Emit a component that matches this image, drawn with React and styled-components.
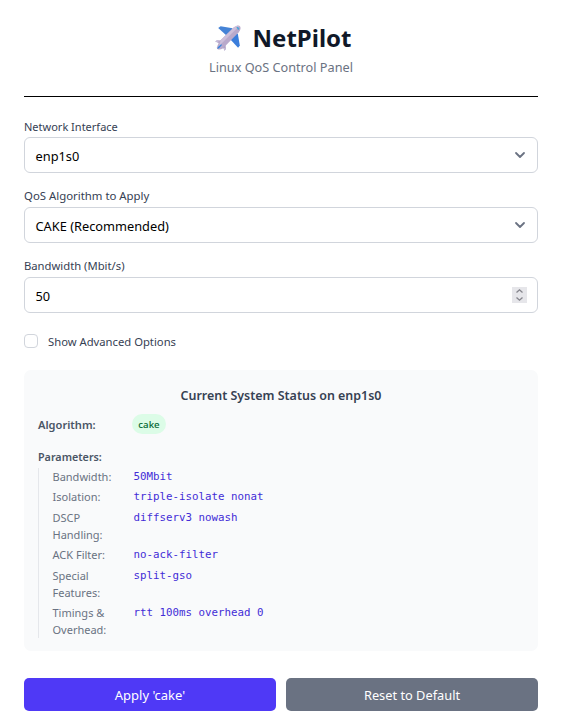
import React from 'react';
import styled, { createGlobalStyle } from 'styled-components';

const GlobalStyle = createGlobalStyle`
  *, *::before, *::after { box-sizing: border-box; }
  html, body { margin: 0; background: #fff; }
  body { font-family: "Noto Sans", "Open Sans", sans-serif; overflow: hidden; }
`;

const Page = styled.main`
  width: 563px;
  height: 721px;
  padding: 23px 25px 0 24px;
  background: #fff;
`;

const Header = styled.header`
  height: 74px;
  border-bottom: 1px solid #000;
  display: flex;
  flex-direction: column;
  align-items: center;
`;

const Title = styled.h1`
  margin: 0;
  height: 30px;
  padding-left: 2.5px;
  display: flex;
  align-items: center;
  gap: 11.5px;
  font-size: 24px;
  line-height: 30px;
  font-weight: 700;
  color: #101828;
  svg { display: block; }
`;

const Subtitle = styled.p`
  margin: 4px 0 0;
  font-size: 12.7px;
  line-height: 20px;
  color: #6a7282;
`;

const Form = styled.form`
  margin: 0;
  padding-top: 21px;
  display: flex;
  flex-direction: column;
`;

const Field = styled.div`
  height: 70px;
`;

const Label = styled.label`
  display: block;
  height: 19px;
  font-size: ${(p) => p.$size}px;
  line-height: ${(p) => p.$line || 16}px;
  color: #364153;
`;

const Control = styled.div`
  height: 36px;
  padding: 0 10px 0 10.5px;
  display: flex;
  align-items: center;
  justify-content: space-between;
  border: 1px solid #d1d5dc;
  border-radius: 6px;
  font-size: 12.8px;
  color: #000;
  background: #fff;
`;

const ControlText = styled.span`
  padding-top: 2px;
`;

const SelectArrow = styled.svg`
  display: block;
  margin-right: 1px;
`;

const Spinner = styled.span`
  width: 15px;
  height: 16px;
  background: #e6e6ea;
  svg { display: block; }
`;

const CheckRow = styled.label`
  margin-top: 5px;
  height: 16px;
  display: flex;
  align-items: center;
  gap: 10px;
  font-size: 11.25px;
  line-height: 16px;
  color: #364153;
`;

const CheckText = styled.span`
  padding-top: 2px;
`;

const Checkbox = styled.span`
  width: 14px;
  height: 14px;
  border: 1px solid #d1d5dc;
  border-radius: 4px;
  background: #fff;
`;

const Panel = styled.section`
  margin-top: 21px;
  height: 281px;
  padding: 14px;
  border-radius: 7px;
  background: #f9fafb;
`;

const PanelTitle = styled.h2`
  margin: 0;
  height: 22px;
  font-size: 12.44px;
  line-height: 23px;
  font-weight: 600;
  text-align: center;
  color: #364153;
`;

const Status = styled.div`
  margin-top: 8px;
  height: 20px;
  display: grid;
  grid-template-columns: 94px auto;
  justify-content: start;
  align-items: center;
`;

const Strong = styled.div`
  font-size: ${(p) => p.$size}px;
  height: 20px;
  line-height: 22px;
  font-weight: 600;
  color: #4a5565;
`;

const Pill = styled.span`
  width: 34px;
  height: 20px;
  border-radius: 10px;
  font-size: 9.7px;
  line-height: 21px;
  font-weight: 500;
  text-align: center;
  color: #016630;
  background: #dcfce7;
`;

const ParamTitle = styled(Strong)`
  margin-top: 13px;
  height: 21px;
  line-height: 20px;
`;

const ParamList = styled.dl`
  margin: 0;
  padding-left: 13.5px;
  border-left: 1px solid #e5e7eb;
  display: grid;
  grid-template-columns: 81px 1fr;
  row-gap: 3.4px;
`;

const Term = styled.dt`
  width: 66px;
  font-size: 11px;
  line-height: 17px;
  color: #6a7282;
`;

const Value = styled.dd`
  margin: 0;
  font-family: "DejaVu Sans Mono", "Liberation Mono", monospace;
  font-size: 10.8px;
  line-height: 17px;
  white-space: pre;
  color: #432dd7;
`;

const Actions = styled.div`
  margin-top: 27px;
  display: grid;
  grid-template-columns: 1fr 1fr;
  gap: 10px;
`;

const Button = styled.button`
  height: 33px;
  padding: 0;
  border: 0;
  border-radius: 5px;
  font-family: inherit;
  font-size: ${(p) => p.$size}px;
  line-height: 34px;
  color: #fff;
  background: ${(p) => (p.$primary ? '#4f39f6' : '#6a7282')};
`;

function Plane() {
  return (
    <svg width="28" height="28" viewBox="3 2 28 28" aria-hidden="true">
      <path d="M8.2 5.9 10.6 4.2 22.6 6.2 21 12 16.5 13.6Z" fill="#4583d6" />
      <path d="M28.1 25.8 29.8 23.4 27.8 11.4 22 13 20.4 17.5Z" fill="#3b7edb" />
      <path d="M5.2 19.4 7 18.2 13 18.6 12 22.6Z" fill="#b5a5ca" />
      <path d="M14.6 28.8 15.8 27 15.4 21 11.4 22Z" fill="#a797bd" />
      <path d="M24 5.2C26.2 3.5 28.9 3.2 30 4.2 31 5.4 30.6 8 28.8 10.2L12.8 26.4C10.2 28.2 6.4 27.9 7 25.2 7.8 22.2 9.2 19.6 10.8 17.9Z" fill="#b9a9cb" />
      <path d="M10.8 17.9 24 5.2C26.2 3.5 28.5 3.2 29.5 3.8L9 23.9Z" fill="#cdbfda" />
      <path d="M26.3 5.6 27.6 4.7 29.5 6.6 28.6 7.9 27.5 7.3 27.3 6.5Z" fill="#48a5d8" />
      <path d="M11.2 22.2 12 23 9 26.2 7.2 27 8 25Z" fill="#3584df" />
      <path d="M5.2 19.4 7 18.2 8.8 18.9 7.8 20.4ZM14.6 28.8 15.8 27 15.1 25.2 13.6 26.2Z" fill="#c6bdd9" />
    </svg>
  );
}

function Chevron() {
  return (
    <SelectArrow width="12" height="12" viewBox="0 0 12 12" fill="none" aria-hidden="true">
      <path d="M2 4 6 8 10 4" stroke="#6a7282" strokeWidth="1.8" strokeLinecap="round" strokeLinejoin="round" />
    </SelectArrow>
  );
}

const params = [
  ['Bandwidth:', '50Mbit'],
  ['Isolation:', 'triple-isolate nonat'],
  ['DSCP Handling:', 'diffserv3 nowash'],
  ['ACK Filter:', 'no-ack-filter'],
  ['Special Features:', 'split-gso'],
  ['Timings & Overhead:', 'rtt 100ms overhead 0'],
];

export default function App() {
  return (
    <>
      <GlobalStyle />
      <Page>
        <Header>
          <Title><Plane />NetPilot</Title>
          <Subtitle>Linux QoS Control Panel</Subtitle>
        </Header>
        <Form>
          <Field>
            <Label $size={11} $line={18}>Network Interface</Label>
            <Control><ControlText>enp1s0</ControlText><Chevron /></Control>
          </Field>
          <Field>
            <Label $size={11.38}>QoS Algorithm to Apply</Label>
            <Control><ControlText>CAKE (Recommended)</ControlText><Chevron /></Control>
          </Field>
          <Field>
            <Label $size={11.25}>Bandwidth (Mbit/s)</Label>
            <Control>
              <ControlText>50</ControlText>
              <Spinner>
                <svg width="15" height="16" viewBox="0 0 15 16" fill="none" stroke="#85858c" strokeWidth="1.3" aria-hidden="true">
                  <path d="M4.5 5.6 7.5 2.8 10.5 5.6M4.5 10.4 7.5 13.2 10.5 10.4" />
                </svg>
              </Spinner>
            </Control>
          </Field>
          <CheckRow><Checkbox /><CheckText>Show Advanced Options</CheckText></CheckRow>
        </Form>
        <Panel>
          <PanelTitle>Current System Status on enp1s0</PanelTitle>
          <Status><Strong $size={11.1}>Algorithm:</Strong><Pill>cake</Pill></Status>
          <ParamTitle $size={10.75}>Parameters:</ParamTitle>
          <ParamList>
            {params.map(([term, value]) => (
              <React.Fragment key={term}>
                <Term>{term}</Term>
                <Value>{value}</Value>
              </React.Fragment>
            ))}
          </ParamList>
        </Panel>
        <Actions>
          <Button type="button" $primary $size={13}>Apply 'cake'</Button>
          <Button type="button" $size={12.8}>Reset to Default</Button>
        </Actions>
      </Page>
    </>
  );
}
